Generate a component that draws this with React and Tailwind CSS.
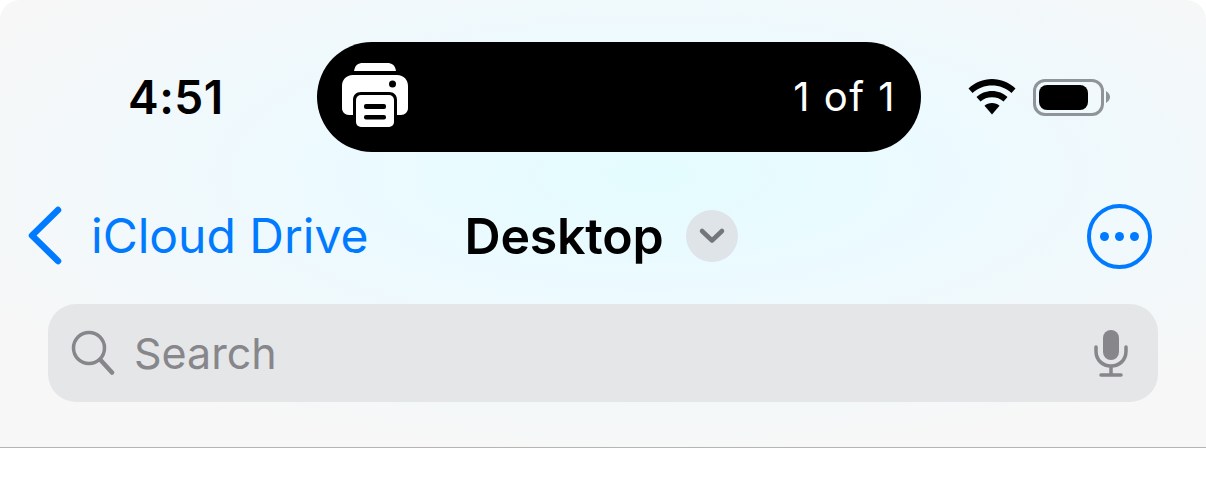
const PrinterIcon = () => (
  <svg width="68" height="66" viewBox="0 0 68 66" className="shrink-0 mb-[4px]">
    <path d="M13 9 C14 3 17 1 22 1 H46 C51 1 54 3 55 9 Z" fill="white" />
    <path
      d="M12 13 H56 C63 13 67 18 67 24 V46 C67 50 64 53 60 53 H56 V38 C56 33 53 30 48 30 H20 C15 30 12 33 12 38 V53 H8 C4 53 1 50 1 46 V24 C1 18 5 13 12 13 Z"
      fill="white"
    />
    <circle cx="51.500" cy="22" r="3.500" fill="black" />
    <rect x="15" y="33" width="38" height="32" rx="5" fill="white" />
    <rect x="23" y="42" width="22" height="5" rx="2" fill="black" />
    <rect x="23" y="53" width="22" height="4.500" rx="2" fill="black" />
  </svg>
);

const WifiIcon = () => (
  <svg width="48" height="36" viewBox="0 0 48 36" className="shrink-0">
    <path d="M24 0 C33 0 41 3.500 47.500 9.500 L43.500 14 C38 9 31.500 6.500 24 6.500 C16.500 6.500 10 9 4.500 14 L0.500 9.500 C7 3.500 15 0 24 0 Z" />
    <path d="M24 12 C30 12 35.500 14.200 39.500 18 L35.500 22.500 C32.500 19.800 28.500 18.300 24 18.300 C19.500 18.300 15.500 19.800 12.500 22.500 L8.500 18 C12.500 14.200 18 12 24 12 Z" />
    <path d="M24 24 C27 24 29.500 25 31.500 26.800 L24 35.500 L16.500 26.800 C18.500 25 21 24 24 24 Z" />
  </svg>
);

const BatteryIcon = () => (
  <div className="flex items-center gap-[2px]">
    <div className="w-[71px] h-[37px] rounded-[12px] border-[3px] border-[#8e9499] p-[3px] box-border">
      <div className="w-[49px] h-full rounded-[8px] bg-black" />
    </div>
    <svg width="4" height="12" viewBox="0 0 4 12">
      <path d="M0 0 C3 2 4 4 4 6 C4 8 3 10 0 12 Z" fill="#8e9499" />
    </svg>
  </div>
);

const SearchIcon = () => (
  <svg width="44" height="46" viewBox="0 0 44 46" fill="none" stroke="#86868b" className="shrink-0">
    <circle cx="18" cy="18" r="15.500" strokeWidth="3.500" />
    <path d="M29.500 30 L41 42.500" strokeWidth="4.500" strokeLinecap="round" />
  </svg>
);

const MicIcon = () => (
  <svg width="34" height="48" viewBox="0 0 34 48" fill="none" stroke="#86868b" className="shrink-0">
    <rect x="9" y="1" width="16" height="30" rx="8" fill="#86868b" stroke="none" />
    <path d="M2 18 V22 C2 31 8.500 37 17 37 C25.500 37 32 31 32 22 V18" strokeWidth="3.500" strokeLinecap="round" />
    <path d="M17 37 V45" strokeWidth="3.500" />
    <path d="M7 46 H27" strokeWidth="3.500" strokeLinecap="round" />
  </svg>
);

export default function App() {
  return (
    <div className="w-[1206px] h-[483px] bg-white overflow-hidden font-['Inter',sans-serif]">
      <div className="h-[448px] border-b border-[#b5b5b5] rounded-t-[20px] bg-[radial-gradient(ellipse_760px_280px_at_650px_175px,#e4fcff_0%,#ecfaff_40%,#f7f7f7_100%)]">
        <div className="flex items-center pt-[42px] h-[152px]">
          <span className="w-[317px] pl-[128px] text-[46px] leading-none font-semibold tracking-[0.500px] text-black">4:51</span>
          <div className="w-[604px] h-[110px] rounded-[55px] bg-black flex items-center justify-between pl-[24px] pr-[25px]">
            <PrinterIcon />
            <span className="text-[40px] leading-none tracking-[1.500px] text-white">1 of 1</span>
          </div>
          <div className="flex items-center pl-[47px] gap-[17px]">
            <WifiIcon />
            <BatteryIcon />
          </div>
        </div>
        <div className="flex items-center h-[64px] mt-[52px] pl-[28px]">
          <svg width="36" height="60" viewBox="0 0 36 60" fill="none" stroke="#007aff" strokeWidth="6.500" strokeLinecap="round" strokeLinejoin="round" className="shrink-0">
            <path d="M30 4 L4 29.500 L30 55" />
          </svg>
          <span className="ml-[27px] text-[48px] leading-none text-[#007aff]">iCloud Drive</span>
          <span className="ml-[96px] text-[50px] leading-none font-semibold tracking-[-0.200px] text-black">Desktop</span>
          <div className="ml-[22px] w-[52px] h-[52px] rounded-full bg-[#dfe4e8] flex items-center justify-center">
            <svg width="28" height="18" viewBox="0 0 28 18" fill="none" stroke="#73777c" strokeWidth="4.500" strokeLinecap="round" strokeLinejoin="round">
              <path d="M4 4 L14 13.500 L24 4" />
            </svg>
          </div>
          <div className="ml-auto mr-[54px] w-[65px] h-[65px] rounded-full border-[4px] border-[#007aff] flex items-center justify-center gap-[6px]">
            <span className="w-[9px] h-[9px] rounded-full bg-[#007aff]" />
            <span className="w-[9px] h-[9px] rounded-full bg-[#007aff]" />
            <span className="w-[9px] h-[9px] rounded-full bg-[#007aff]" />
          </div>
        </div>
        <div className="mt-[36px] mx-[48px] h-[98px] rounded-[28px] bg-[#e5e6e8] flex items-center pl-[23px] pr-[30px]">
          <SearchIcon />
          <span className="ml-[19px] text-[43px] leading-none text-[#86868b]">Search</span>
          <div className="ml-auto">
            <MicIcon />
          </div>
        </div>
      </div>
    </div>
  );
}
